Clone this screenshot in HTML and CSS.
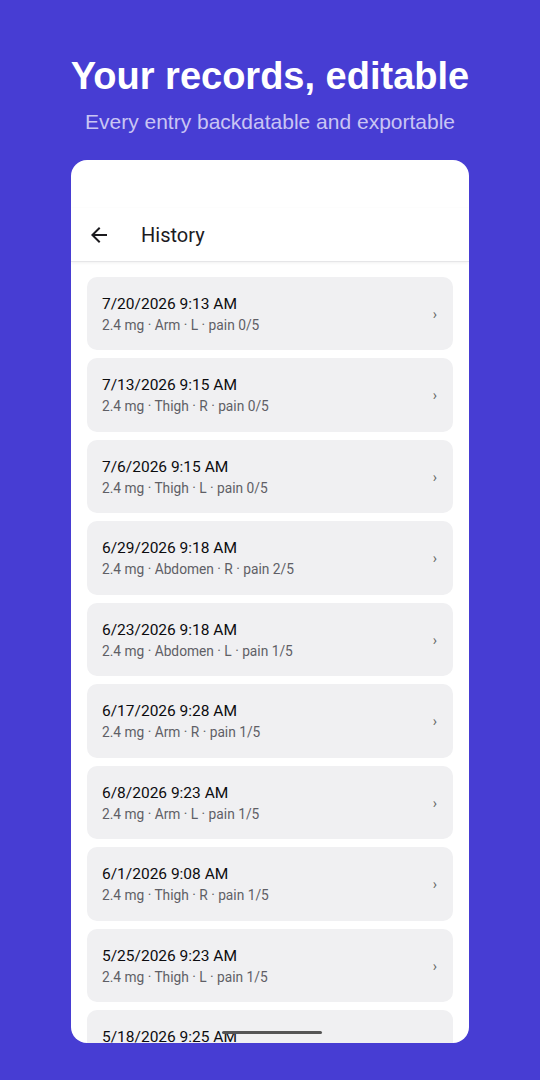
FILE: index.html
```html
<!DOCTYPE html>
<html lang="en">
<head>
    <meta charset="UTF-8">
    <meta name="viewport" content="width=device-width, initial-scale=1.0">
    <title>History</title>
    <link rel="stylesheet" href="styles.css">
</head>
<body>
    <header class="hero">
        <h1>Your records, editable</h1>
        <p>Every entry backdatable and exportable</p>
    </header>

    <div class="phone">
        <div class="status-bar"></div>
        <div class="app-bar">
            <svg class="back" width="24" height="24" viewBox="0 0 24 24">
                <path d="M20 11H7.83l5.59-5.59L12 4l-8 8 8 8 1.41-1.41L7.83 13H20v-2z" fill="#1c1b1f"/>
            </svg>
            <span class="app-title">History</span>
        </div>
        <div class="list">
            <div class="entry"><div class="entry-text"><div class="date">7/20/2026 9:13 AM</div><div class="meta">2.4 mg · Arm · L · pain 0/5</div></div><span class="chevron">›</span></div>
            <div class="entry"><div class="entry-text"><div class="date">7/13/2026 9:15 AM</div><div class="meta">2.4 mg · Thigh · R · pain 0/5</div></div><span class="chevron">›</span></div>
            <div class="entry"><div class="entry-text"><div class="date">7/6/2026 9:15 AM</div><div class="meta">2.4 mg · Thigh · L · pain 0/5</div></div><span class="chevron">›</span></div>
            <div class="entry"><div class="entry-text"><div class="date">6/29/2026 9:18 AM</div><div class="meta">2.4 mg · Abdomen · R · pain 2/5</div></div><span class="chevron">›</span></div>
            <div class="entry"><div class="entry-text"><div class="date">6/23/2026 9:18 AM</div><div class="meta">2.4 mg · Abdomen · L · pain 1/5</div></div><span class="chevron">›</span></div>
            <div class="entry"><div class="entry-text"><div class="date">6/17/2026 9:28 AM</div><div class="meta">2.4 mg · Arm · R · pain 1/5</div></div><span class="chevron">›</span></div>
            <div class="entry"><div class="entry-text"><div class="date">6/8/2026 9:23 AM</div><div class="meta">2.4 mg · Arm · L · pain 1/5</div></div><span class="chevron">›</span></div>
            <div class="entry"><div class="entry-text"><div class="date">6/1/2026 9:08 AM</div><div class="meta">2.4 mg · Thigh · R · pain 1/5</div></div><span class="chevron">›</span></div>
            <div class="entry"><div class="entry-text"><div class="date">5/25/2026 9:23 AM</div><div class="meta">2.4 mg · Thigh · L · pain 1/5</div></div><span class="chevron">›</span></div>
            <div class="entry"><div class="entry-text"><div class="date">5/18/2026 9:25 AM</div></div></div>
        </div>
        <div class="home-indicator"></div>
    </div>
</body>
</html>
```

FILE: styles.css
```css
body {
    margin: 0;
    height: 1080px;
    overflow: hidden;
    background: #473dd3;
    font-family: Roboto, "Noto Sans", sans-serif;
}
.hero {
    text-align: center;
    padding-top: 54px;
}
.hero h1 {
    margin: 0;
    font-family: "Liberation Sans", Arial, sans-serif;
    font-weight: bold;
    font-size: 38px;
    line-height: 44px;
    color: white;
}
.hero p {
    margin: 12px 0 0;
    font-family: "Liberation Sans", Arial, sans-serif;
    font-size: 21px;
    line-height: 24px;
    color: #c9c5f3;
}
.phone {
    position: relative;
    width: 398px;
    height: 883px;
    margin: 26px auto 0;
    background: white;
    border-radius: 16px;
    overflow: hidden;
}
.status-bar {
    height: 48px;
}
.app-bar {
    display: flex;
    align-items: center;
    height: 53px;
    padding-left: 16px;
    border-bottom: 1px solid #e6e6e8;
    box-shadow: 0 1px 3px rgba(0, 0, 0, 0.06);
}
.back {
    margin-right: 30px;
}
.app-title {
    font-size: 20px;
    color: #1c1b1f;
}
.list {
    display: flex;
    flex-direction: column;
    gap: 8px;
    padding: 15px 16px 0;
}
.entry {
    display: flex;
    align-items: center;
    padding: 17px 16px 14.45px 15px;
    background: #f0f0f2;
    border-radius: 10px;
}
.entry-text {
    flex: 1;
}
.date {
    font-size: 15.5px;
    line-height: 20px;
    color: #0c0c0f;
}
.meta {
    font-size: 13.75px;
    line-height: 22px;
    color: #5f5f66;
}
.chevron {
    font-size: 14px;
    color: #666;
    margin: -2px 0 0;
}
.home-indicator {
    position: absolute;
    left: 151px;
    bottom: 9px;
    width: 100px;
    height: 3px;
    border-radius: 2px;
    background: #555;
}
```
